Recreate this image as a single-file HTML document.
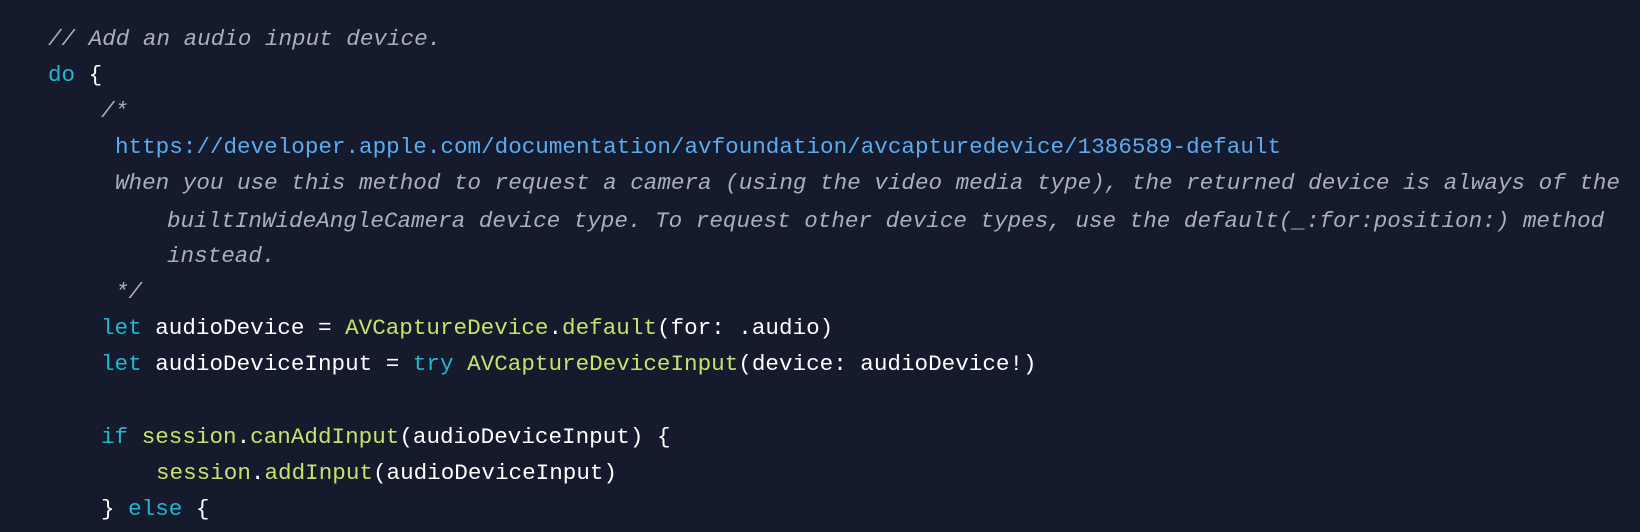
<!DOCTYPE html>
<html><head><meta charset="utf-8"><style>
html,body{margin:0;padding:0;background:#151a2c;width:1640px;height:532px;overflow:hidden}
.l{position:absolute;white-space:pre;font-family:"Liberation Mono",monospace;font-size:22.6px;line-height:36px;color:#fff;height:36px}
.c{color:#a9b0b8;font-style:italic}
.k{color:#1fb8cf}
.f{color:#c5e46a}
.u{color:#5aacf0}
</style></head><body>
<div class="l c" style="left:48px;top:21px">// Add an audio input device.</div>
<div class="l" style="left:48px;top:57px"><span class="k">do</span> {</div>
<div class="l c" style="left:101px;top:93px">/*</div>
<div class="l u" style="left:115px;top:129px">https://developer.apple.com/documentation/avfoundation/avcapturedevice/1386589-default</div>
<div class="l c" style="left:115px;top:165px">When you use this method to request a camera (using the video media type), the returned device is always of the</div>
<div class="l c" style="left:167px;top:203px">builtInWideAngleCamera device type. To request other device types, use the default(_:for:position:) method</div>
<div class="l c" style="left:167px;top:238px">instead.</div>
<div class="l c" style="left:115px;top:274px">*/</div>
<div class="l" style="left:101px;top:310px"><span class="k">let</span> audioDevice = <span class="f">AVCaptureDevice</span>.<span class="f">default</span>(for: .audio)</div>
<div class="l" style="left:101px;top:346px"><span class="k">let</span> audioDeviceInput = <span class="k">try</span> <span class="f">AVCaptureDeviceInput</span>(device: audioDevice!)</div>
<div class="l" style="left:101px;top:419px"><span class="k">if</span> <span class="f">session</span>.<span class="f">canAddInput</span>(audioDeviceInput) {</div>
<div class="l" style="left:156px;top:455px"><span class="f">session</span>.<span class="f">addInput</span>(audioDeviceInput)</div>
<div class="l" style="left:101px;top:491px">} <span class="k">else</span> {</div>
</body></html>
